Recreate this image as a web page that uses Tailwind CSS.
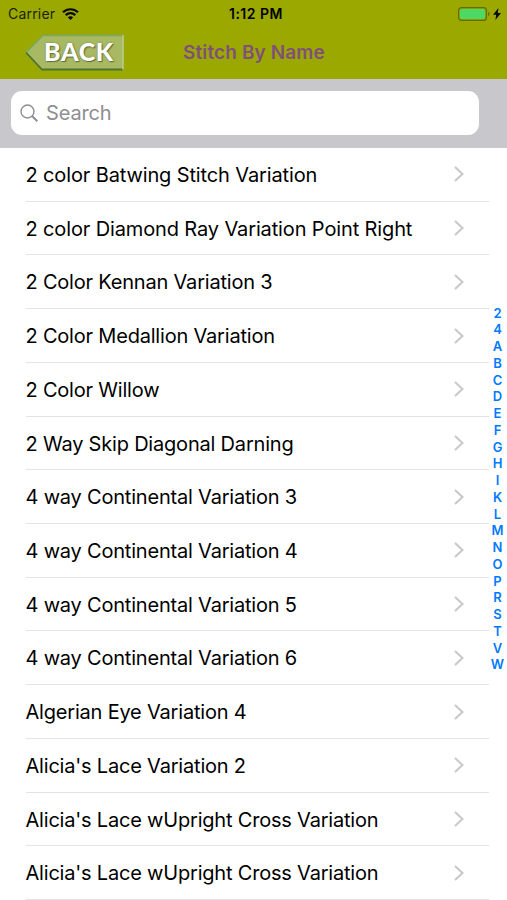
<!DOCTYPE html>
<html lang="en">
<head>
<meta charset="utf-8">
<title>Stitch By Name</title>
<script src="https://cdn.jsdelivr.net/npm/@tailwindcss/browser@4"></script>
</head>
<body class="relative w-[507px] h-[900px] overflow-hidden bg-white font-['Inter','Liberation_Sans',sans-serif]">
<header class="h-[79px] bg-[#9ba800]">
  <div class="grid grid-cols-3 items-center h-[27px] pl-2 pr-[5px] text-[14px] text-[#1c1f00]">
    <div class="flex items-center gap-[7px]">
      <span class="tracking-[0.2px]">Carrier</span>
      <svg width="17" height="12" viewBox="0 0 17 12" fill="none" stroke="#080900" stroke-width="2.2"><path d="M1 4.3C5.2.2 11.8.2 16 4.3M3.7 7.1c2.7-2.6 6.9-2.6 9.6 0"/><path d="M8.5 11.9 5.8 9.2c1.5-1.4 3.9-1.4 5.4 0z" fill="#080900" stroke="none"/></svg>
    </div>
    <div class="text-center font-semibold text-[14px] tracking-[0.5px] pl-[2px] text-black">1:12 PM</div>
    <div class="flex items-center justify-end gap-[3px]">
      <svg class="-ml-px" width="32" height="14" viewBox="0 0 32 14"><rect x=".6" y=".6" width="27.8" height="12.8" rx="3" fill="none" stroke="#656d00" stroke-width="1.2"/><rect x="2" y="2" width="25" height="10" rx="1.5" fill="#4cd964"/><path d="M30 4.8c2 .8 2 3.6 0 4.4z" fill="#656d00"/></svg>
      <svg class="mr-[1px]" width="8" height="12" viewBox="0 0 8 12"><path d="M5.5 0 0 6.8h3.2L2.4 12 8 5H4.7z" fill="#080900"/></svg>
    </div>
  </div>
  <div class="flex items-center h-[50px]">
    <div class="relative ml-[25px] w-[99px] h-[37px]">
      <svg class="absolute left-0 top-0" width="99" height="37" viewBox="0 0 99 37"><path d="M1 18.500 18 1.500h80v33.500H17z" fill="#a8b863"/><path d="M1 18.500 18 1.500h80" fill="none" stroke="#78a866" stroke-width="1.400"/><path d="M1 18.500 17 35.500h81" fill="none" stroke="#4d7433" stroke-width="1.800"/><path d="M98 1v34.500" stroke="#b9cc91" stroke-width="1.500"/></svg>
      <span class="absolute left-[19px] top-[2px] leading-[30px] text-[25px] font-black text-white font-['Lato',sans-serif] tracking-[0.7px] [text-shadow:1px_1px_1px_#5f6e35,0_0_2px_#75814b]">BACK</span>
    </div>
    <h1 class="ml-[59px] pt-[2px] text-[19px] font-semibold tracking-[0.12px] text-[#80507b] whitespace-nowrap">Stitch By Name</h1>
  </div>
</header>
<div class="h-[69px] bg-[#c8c7cc] pt-3 pl-[11px]">
  <div class="flex items-center gap-[8px] w-[468px] h-[44px] rounded-[11px] bg-white pl-[9px]">
    <svg width="19" height="19" viewBox="0 0 19 19" fill="none" stroke="#8e8e93" stroke-width="1.400"><circle cx="7.500" cy="7.500" r="6.500"/><path d="m12.300 12.300 5 5" stroke-width="2"/></svg>
    <span class="-ml-px text-[20px] tracking-[-0.15px] text-[#8e8e93]">Search</span>
  </div>
</div>
<ul id="stitches" class="w-[489px] pl-[26px]"></ul>
<nav id="letters" class="absolute right-[1px] top-[304.700px] w-[17px] text-center text-[13px] font-semibold text-[#007aff]"></nav>
<script>
const names = ["2 color Batwing Stitch Variation","2 color Diamond Ray Variation Point Right","2 Color Kennan Variation 3","2 Color Medallion Variation","2 Color Willow","2 Way Skip Diagonal Darning","4 way Continental Variation 3","4 way Continental Variation 4","4 way Continental Variation 5","4 way Continental Variation 6","Algerian Eye Variation 4","Alicia's Lace Variation 2","Alicia's Lace wUpright Cross Variation","Alicia's Lace wUpright Cross Variation"];
document.getElementById("stitches").innerHTML = names.map((n, i) => `<li class="flex items-center justify-between h-[53.73px] border-b border-[#e3e3e5] pr-[24px] text-[20px] text-black whitespace-nowrap ${i < 2 ? "tracking-[-0.13px]" : "tracking-[-0.2px]"}"><span class="-ml-[0.5px] pt-[1.200px]">${n}</span><svg width="11" height="16" viewBox="0 0 11 16" fill="none" stroke="#c7c7cc" stroke-width="2"><path d="m1 1 7.500 7-7.500 7"/></svg></li>`).join("");
document.getElementById("letters").innerHTML = [..."24ABCDEFGHIKLMNOPRSTVW"].map(c => `<div class="h-[16.76px] leading-[16.76px]">${c}</div>`).join("");
</script>
</body>
</html>
